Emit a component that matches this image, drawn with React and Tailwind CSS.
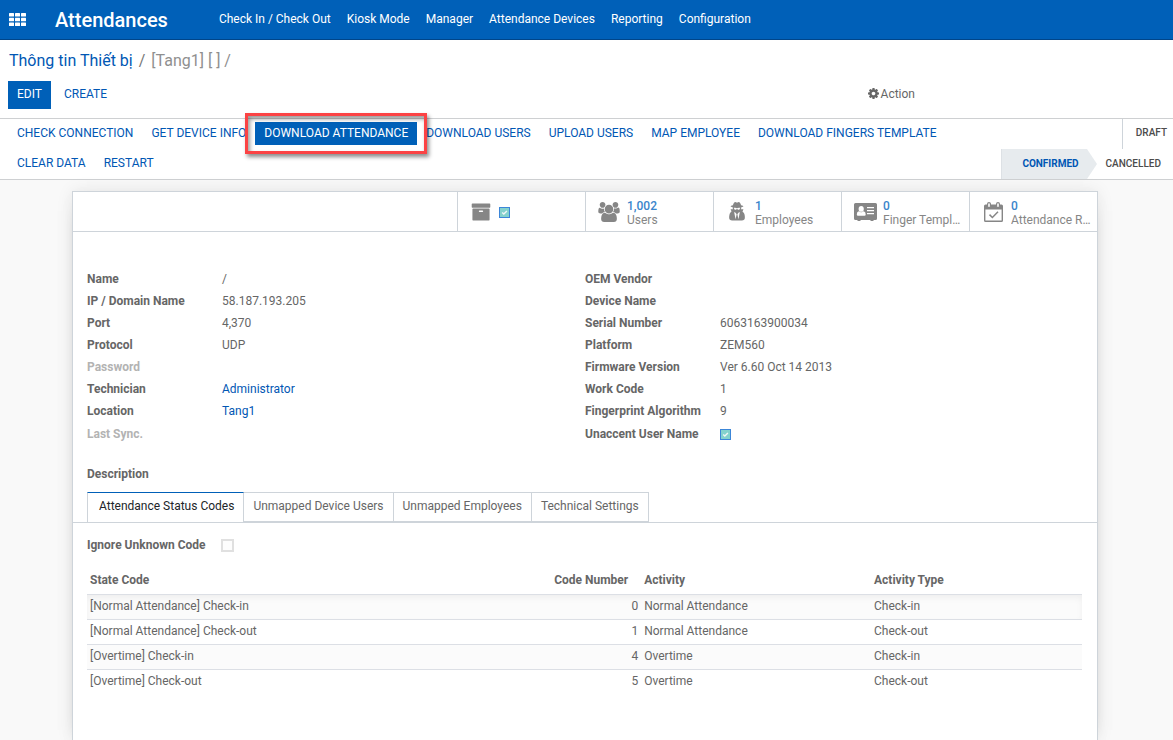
const BLUE_LINK = "text-[#0157b4] hover:underline";

function Glyph({ viewBox, d, className }) {
  return (
    <svg viewBox={viewBox} className={className} fill="currentColor" aria-hidden="true">
      <path d={d} />
    </svg>
  );
}

const COG =
  "M1024 896q0-106-75-181t-181-75-181 75-75 181 75 181 181 75 181-75 75-181zm512-109v222q0 12-8 23t-20 13l-185 28q-19 54-39 91 35 50 107 138 10 12 10 25t-9 23q-27 37-99 108t-94 71q-12 0-26-9l-138-108q-44 23-91 38-16 136-29 186-7 28-36 28h-222q-14 0-24.5-8.5t-11.5-21.5l-28-184q-49-16-90-37l-141 107q-10 9-25 9-14 0-25-11-126-114-165-168-7-10-7-23 0-12 8-23 15-21 51-66.5t54-70.5q-27-50-41-99l-183-27q-13-2-21-12.5t-8-23.5v-222q0-12 8-23t19-13l186-28q14-46 39-92-40-57-107-138-10-12-10-24 0-10 9-23 26-36 98.5-107.5t94.5-71.5q13 0 26 10l138 107q44-23 91-38 16-136 29-186 7-28 36-28h222q14 0 24.5 8.5t11.5 21.5l28 184q49 16 90 37l142-107q9-9 24-9 13 0 25 10 129 119 165 170 7 8 7 22 0 12-8 23-15 21-51 66.5t-54 70.5q26 50 41 98l183 28q13 2 21 12.5t8 23.5z";
const ARCHIVE =
  "M1088 832q0-26-19-45t-45-19h-256q-26 0-45 19t-19 45 19 45 45 19h256q26 0 45-19t19-45zm576-192v960q0 26-19 45t-45 19h-1408q-26 0-45-19t-19-45v-960q0-26 19-45t45-19h1408q26 0 45 19t19 45zm64-448v256q0 26-19 45t-45 19h-1536q-26 0-45-19t-19-45v-256q0-26 19-45t45-19h1536q26 0 45 19t19 45z";
const USERS =
  "M593 896q-162 5-265 128h-134q-82 0-138-40.5t-56-118.5q0-353 124-353 6 0 43.5 21t97.5 42.5 119 21.5q67 0 133-23-5 37-5 66 0 143 83 265zm1071 637q0 120-73 189.5t-194 69.5h-874q-121 0-194-69.5t-73-189.5q0-53 3.5-103.5t14-109 26.5-108.5 43-97.5 62-81 85.5-53.5 111.5-20q10 0 43 21.5t73 48 107 48 135 21.5 135-21.5 107-48 73-48 43-21.5q61 0 111.5 20t85.5 53.5 62 81 43 97.5 26.5 108.5 14 109 3.5 103.5zm-1024-1277q0 106-75 181t-181 75-181-75-75-181 75-181 181-75 181 75 75 181zm704 384q0 159-112.5 271.5t-271.5 112.5-271.5-112.5-112.5-271.5 112.5-271.5 271.5-112.5 271.5 112.5 112.5 271.5zm576 225q0 78-56 118.5t-138 40.5h-134q-103-123-265-128 83-122 83-265 0-29-5-66 66 23 133 23 59 0 119-21.5t97.5-42.5 43.5-21q124 0 124 353zm-128-609q0 106-75 181t-181 75-181-75-75-181 75-181 181-75 181 75 75 181z";
const SECRET =
  "M576 1536l96-448-96-128-128-64zm256 0l128-640-128 64-96 128zm160-1010q-2-4-4-6-10-8-96-8-70 0-167 19-7 2-21 2t-21-2q-97-19-167-19-86 0-96 8-2 2-4 6 2 18 4 27 2 3 7.5 6.5t7.5 10.5q2 4 7.500 20.500t7 20.500 7.500 17 8.500 17 9 14 12 13.500 14 9.500 17.500 8 20.500 4 24.500 2q36 0 59-12.500t32.500-30 14.500-34.500 11.500-29.500 17.500-12.500h12q11 0 17.500 12.500t11.500 29.500 14.500 34.500 32.500 30 59 12.500q13 0 24.500-2t20.500-4 17.500-8 14-9.500 12-13.500 9-14 8.500-17 7.500-17 7-20.500 7.500-20.500q2-7 7.500-10.500t7.500-6.500q2-9 4-27zm416 879q0 121-73 190t-194 69h-874q-121 0-194-69t-73-190q0-61 4.500-118t19-125.500 37.500-123.500 63.500-103.500 93.500-74.500l-90-220h214q-22-64-22-128 0-12 2-32-194-40-194-96 0-57 210-99 17-62 51.500-134t70.500-114q32-37 76-37 30 0 84 31t84 31 84-31 84-31q44 0 76 37 36 42 70.500 114t51.500 134q210 42 210 99 0 56-194 96 7 81-20 160h214l-82 225q63 33 107.500 96.500t65.500 143.500 29 151.500 8 148.500z";

function IdCardIcon() {
  return (
    <svg viewBox="0 0 23 18" className="h-[18px] w-[23px]" fill="currentColor" aria-hidden="true">
      <path
        fillRule="evenodd"
        d="M1.500 0H21.500Q23 0 23 1.500V15.500Q23 17 21.500 17H19.500V18H16.500V17H6.500V18H3.500V17H1.500Q0 17 0 15.500V1.500Q0 0 1.500 0ZM7.200 3A2.600 2.900 0 1 0 7.200 8.800 2.600 2.900 0 1 0 7.200 3ZM4.700 8.300Q2.800 8.800 2.800 11.600 2.800 12.800 4 12.800H10.500Q11.700 12.800 11.700 11.600 11.700 8.800 9.700 8.300 7.200 10.300 4.700 8.300ZM13 4V5.300H20V4ZM13 7V8.300H20V7ZM13 10V11.300H20V10Z"
      />
    </svg>
  );
}

function CalendarIcon() {
  return (
    <svg viewBox="0 0 19 20" className="h-5 w-[19px]" aria-hidden="true">
      <path fill="currentColor" fillRule="evenodd" d="M1.500 2.500H17.500Q19 2.500 19 4V18.500Q19 20 17.500 20H1.500Q0 20 0 18.500V4Q0 2.500 1.500 2.500ZM1.400 7.500V18.600H17.600V7.500Z" />
      <rect x="3.600" y=".6" width="2.800" height="5" rx="1.400" fill="#fff" stroke="currentColor" strokeWidth="1.200" />
      <rect x="12.600" y=".6" width="2.800" height="5" rx="1.400" fill="#fff" stroke="currentColor" strokeWidth="1.200" />
      <path d="M5.500 12.600 8.400 15.500 14 9.800" fill="none" stroke="currentColor" strokeWidth="1.500" />
    </svg>
  );
}

function TickBox({ id, label, className }) {
  return (
    <span className={`relative inline-flex size-[11px] ${className ?? ""}`}>
      <input
        id={id}
        type="checkbox"
        aria-label={label}
        defaultChecked
        className="size-[11px] appearance-none border border-[#3c86d8] bg-[#d9dde0] checked:bg-[#84d2cd]"
      />
      <svg viewBox="0 0 11 11" className="pointer-events-none absolute inset-0 size-[11px]" aria-hidden="true">
        <path d="M3.200 5.600 4.800 7.100 7.900 4" fill="none" stroke="#f1f7f6" strokeWidth="1.400" />
      </svg>
    </span>
  );
}

const NAV = ["Check In / Check Out", "Kiosk Mode", "Manager", "Attendance Devices", "Reporting", "Configuration"];

function Navbar() {
  return (
    <header className="flex h-10 items-center border-b border-[#004589] bg-[#0060b8] text-white">
      <button type="button" aria-label="Apps" className="ml-[9px] flex">
        <svg viewBox="0 0 17 13" className="h-[13px] w-[17px]" fill="currentColor" aria-hidden="true">
          {[0, 6, 12].map((x) =>
            [0, 4.700, 9.400].map((y) => <rect key={`${x}-${y}`} x={x} y={y} width="5" height="3.600" rx=".5" />)
          )}
        </svg>
      </button>
      <a href="#home" className="ml-[29px] text-xl font-medium">Attendances</a>
      <nav className="ml-[51px] flex gap-4 text-[12px] leading-[18px]">
        {NAV.map((n) => (
          <a key={n} href="#menu" className="pb-[2px]">{n}</a>
        ))}
      </nav>
    </header>
  );
}

function ControlPanel() {
  return (
    <div className="border-b border-[#ced0d2] bg-white px-2 pt-[9px] pb-[9px]">
      <nav aria-label="Breadcrumb" className="flex h-6 items-center gap-[6px] pl-px text-base">
        <a href="#devices" className={BLUE_LINK}>Thông tin Thiết bị</a>
        <span className="text-[#777]">/</span>
        <span className="text-[#8f8f8f]">[Tang1] [ ] /</span>
      </nav>
      <div className="mt-2 flex h-7 items-center">
        <div className="flex flex-1 items-center gap-1">
          <button type="button" className="h-7 bg-[#0060b8] px-[9px] pb-[3px] text-white">EDIT</button>
          <button type="button" className="h-7 px-[9px] pb-[3px] text-[#0157b4]">CREATE</button>
        </div>
        <button type="button" className="mr-[250px] flex items-center gap-[2px] pb-[3px] text-[#666]">
          <Glyph viewBox="0 0 1536 1792" d={COG} className="h-[13px] w-[11px]" />
          Action
        </button>
      </div>
    </div>
  );
}

const ACTIONS = [
  "CHECK CONNECTION",
  "GET DEVICE INFO",
  "DOWNLOAD ATTENDANCE",
  "DOWNLOAD USERS",
  "UPLOAD USERS",
  "MAP EMPLOYEE",
  "DOWNLOAD FINGERS TEMPLATE",
  "CLEAR DATA",
  "RESTART",
];

function StatusBar() {
  return (
    <div className="flex border-b border-[#ced0d2] bg-white">
      <div className="flex min-w-0 flex-1 flex-wrap content-start gap-y-[7px] pt-[3px] pl-2">
        {ACTIONS.map((a) =>
          a === "DOWNLOAD ATTENDANCE" ? (
            <span key={a} className="relative inline-flex">
              <button type="button" className="h-[23px] bg-[#0060b8] px-[9px] pb-[2px] text-white">{a}</button>
              <span className="pointer-events-none absolute -inset-x-[10px] -inset-y-[9px] border-[3px] border-[#fb4344] shadow-[2px_3px_4px_rgba(0,0,0,0.45),inset_2px_3px_4px_rgba(0,0,0,0.4)]" />
            </span>
          ) : (
            <button key={a} type="button" className="h-[23px] px-[9px] pb-[2px] text-[#0157b4]">{a}</button>
          )
        )}
      </div>
      <div className="flex flex-col items-end text-[10px] font-medium text-[#4c4c4c]">
        <button type="button" className="h-[30px] border-l border-[#ced4da] pr-[6px] pb-[2px] pl-[13px]">DRAFT</button>
        <div className="flex">
          <button type="button" className="relative h-[30px] border-l border-[#dde1e5] bg-[#e7ebee] pr-2 pl-5 font-bold text-[#0157b4]">
            CONFIRMED
            <svg viewBox="0 0 10 30" className="absolute top-0 left-full h-[30px] w-[10px]" fill="#e7ebee" aria-hidden="true">
              <path d="M0 0 10 15 0 30Z" />
            </svg>
          </button>
          <button type="button" className="h-[30px] pr-3 pl-[19px]">CANCELLED</button>
        </div>
      </div>
    </div>
  );
}

const STATS = [
  { label: "Users", value: "1,002", icon: <Glyph viewBox="0 0 1920 1792" d={USERS} className="h-5 w-[22px]" /> },
  { label: "Employees", value: "1", icon: <Glyph viewBox="0 0 1408 1792" d={SECRET} className="h-5 w-4" /> },
  { label: "Finger Templates", value: "0", icon: <IdCardIcon /> },
  { label: "Attendance Records", value: "0", icon: <CalendarIcon /> },
];

function StatButtons() {
  return (
    <div className="flex h-10 justify-end border-b border-[#ced4da] text-[#868686]">
      <div className="flex w-32 items-center border-l border-[#ced4da] pl-[13px]">
        <Glyph viewBox="0 0 1792 1792" d={ARCHIVE} className="h-5 w-5" />
        <TickBox label="Active" className="mt-[2px] ml-2" />
      </div>
      {STATS.map((s) => (
        <button key={s.label} type="button" className="flex w-32 items-center border-l border-[#ced4da] pr-[6px] text-left">
          <span className="flex w-[41px] shrink-0 justify-center pl-[5px]">{s.icon}</span>
          <span className="min-w-0 flex-1 pt-[2px] leading-[14px]">
            <span className="block font-medium text-[#3a85cb]">{s.value}</span>
            <span className="block truncate">{s.label}</span>
          </span>
        </button>
      ))}
    </div>
  );
}

const LEFT = [
  { label: "Name", value: "/" },
  { label: "IP / Domain Name", value: "58.187.193.205" },
  { label: "Port", value: "4,370" },
  { label: "Protocol", value: "UDP" },
  { label: "Password", muted: true },
  { label: "Technician", value: "Administrator", link: true },
  { label: "Location", value: "Tang1", link: true },
  { label: "Last Sync.", muted: true },
];
const RIGHT = [
  { label: "OEM Vendor" },
  { label: "Device Name" },
  { label: "Serial Number", value: "6063163900034" },
  { label: "Platform", value: "ZEM560" },
  { label: "Firmware Version", value: "Ver 6.60 Oct 14 2013" },
  { label: "Work Code", value: "1" },
  { label: "Fingerprint Algorithm", value: "9" },
  { label: "Unaccent User Name", check: true },
];

function FieldGroup({ rows }) {
  return (
    <dl className="grid grid-cols-[135px_1fr] grid-rows-[repeat(7,22px)_24px] items-center">
      {rows.map((r) => (
        <div key={r.label} className="contents">
          <dt className={r.muted ? "font-bold text-[#b3b3b3]" : "font-bold"}>
            {r.check ? <label htmlFor="unaccent">{r.label}</label> : r.label}
          </dt>
          <dd className="flex items-center">
            {r.check ? <TickBox id="unaccent" /> : r.link ? <a href="#record" className={BLUE_LINK}>{r.value}</a> : r.value}
          </dd>
        </div>
      ))}
    </dl>
  );
}

const TABS = ["Attendance Status Codes", "Unmapped Device Users", "Unmapped Employees", "Technical Settings"];

function Tabs() {
  return (
    <div role="tablist" className="flex border-b border-[#ced4da] pl-[14px]">
      {TABS.map((t, i) => (
        <button
          key={t}
          type="button"
          role="tab"
          aria-selected={i === 0}
          className={
            i === 0
              ? "h-[30px] border-x border-t border-x-[#ced4da] border-t-[#0060b8] pr-[9px] pb-[3px] pl-[11px] text-[#212529]"
              : "h-[30px] border-y border-r border-[#ced4da] px-[9px] pb-[2px]"
          }
        >
          {t}
        </button>
      ))}
    </div>
  );
}

const CODES = [
  ["[Normal Attendance] Check-in", 0, "Normal Attendance", "Check-in"],
  ["[Normal Attendance] Check-out", 1, "Normal Attendance", "Check-out"],
  ["[Overtime] Check-in", 4, "Overtime", "Check-in"],
  ["[Overtime] Check-out", 5, "Overtime", "Check-out"],
];

function CodesTable() {
  return (
    <table className="w-full table-fixed text-left">
      <colgroup>
        <col className="w-[36.6%]" />
        <col className="w-[19.1%]" />
        <col className="w-[23.1%]" />
        <col className="w-[21.2%]" />
      </colgroup>
      <thead>
        <tr className="h-[26px] border-b border-[#dcdfe5]">
          <th className="px-[3px] pb-[2px] font-bold">State Code</th>
          <th className="pr-[13px] pb-[2px] text-right font-bold">Code Number</th>
          <th className="px-[3px] pb-[2px] font-bold">Activity</th>
          <th className="px-[3px] pb-[2px] font-bold">Activity Type</th>
        </tr>
      </thead>
      <tbody>
        {CODES.map((r) => (
          <tr
            key={r[0]}
            className="h-[25px] border-b border-[#dcdfe5] first:shadow-[inset_0_4px_6px_rgba(0,0,0,0.05)] last:border-0 odd:bg-[#fbfbfb]"
          >
            <td className="px-[3px] pb-px">{r[0]}</td>
            <td className="px-[3px] pb-px text-right">{r[1]}</td>
            <td className="px-[3px] pb-px">{r[2]}</td>
            <td className="px-[3px] pb-px">{r[3]}</td>
          </tr>
        ))}
      </tbody>
    </table>
  );
}

export default function App() {
  return (
    <div className="flex min-h-screen flex-col bg-[#f9f9f9] font-['Roboto',sans-serif] text-[12px] leading-[18px] text-[#666]">
      <Navbar />
      <ControlPanel />
      <StatusBar />
      <main className="mt-[11px] mr-[75px] ml-[72px] flex-1 border border-b-0 border-[#ced4da] bg-white shadow-[0_5px_20px_-15px_rgba(0,0,0,0.6),0_0_16px_rgba(0,0,0,0.08)]">
        <StatButtons />
        <div className="mt-9 grid grid-cols-2 px-[14px]">
          <FieldGroup rows={LEFT} />
          <FieldGroup rows={RIGHT} />
        </div>
        <h2 className="mt-[19px] mb-[9px] px-[14px] font-bold">Description</h2>
        <Tabs />
        <div className="pt-[13px] pr-[15px] pl-[14px]">
          <div className="flex items-center">
            <label htmlFor="ignore-unknown" className="w-[134px] font-bold">Ignore Unknown Code</label>
            <input id="ignore-unknown" type="checkbox" className="size-[13px] appearance-none border-2 border-[#e0e0e0] bg-[#fdfdfd] checked:bg-[#84d2cd]" />
          </div>
          <div className="mt-[14px]">
            <CodesTable />
          </div>
        </div>
      </main>
    </div>
  );
}
